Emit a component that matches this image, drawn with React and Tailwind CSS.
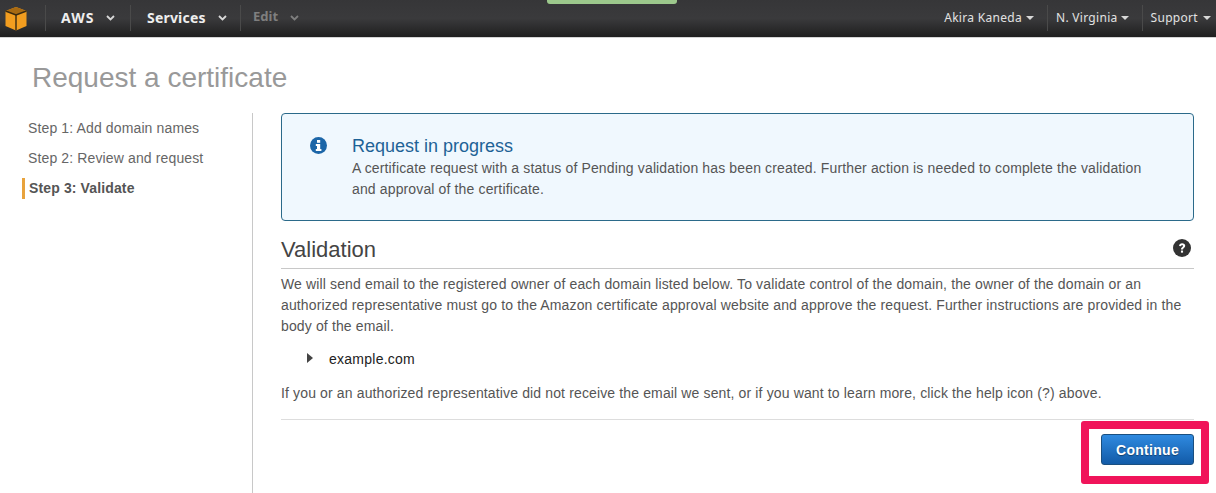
import React from "react";

const Chevron = ({ c = "#d8d8d8" }) => (
  <svg width="9" height="6" viewBox="0 0 9 6" className="shrink-0">
    <path d="M1 1 L4.5 4.5 L8 1" fill="none" stroke={c} strokeWidth="1.8" />
  </svg>
);
const Caret = () => (
  <svg width="8" height="4" viewBox="0 0 8 4" className="shrink-0">
    <path d="M0 0 H8 L4 4 Z" fill="#d8d8d8" />
  </svg>
);
const Sep = () => <div className="w-px h-[26px] bg-[#4a4a4a] shrink-0" />;

const Cube = () => (
  <svg width="22" height="25" viewBox="0 0 22 25" className="shrink-0">
    <path d="M11 1 L21.5 5 V20 L11 24.5 L0.5 20 V5 Z" fill="#f29d1f" />
    <path d="M0.5 5 L11 1 L21.5 5 L11 9 Z" fill="#a86a12" />
    <path d="M0.5 5 L11 9 L21.5 5" fill="none" stroke="#3a2a10" strokeWidth="1.4" />
    <path d="M11 9 V24.5" stroke="#3a2a10" strokeWidth="1.4" />
  </svg>
);

const InfoIcon = () => (
  <svg width="17" height="17" viewBox="0 0 17 17" className="shrink-0">
    <circle cx="8.5" cy="8.5" r="8.5" fill="#1c66a8" />
    <rect x="7" y="3" width="3.2" height="2.8" fill="#fff" />
    <path d="M5.8 7 H10.2 V12 H11.4 V14 H5.8 V12 H7 V9 H5.8 Z" fill="#fff" />
  </svg>
);

const HelpIcon = () => (
  <svg width="18" height="18" viewBox="0 0 19 19" className="shrink-0">
    <circle cx="9.5" cy="9.5" r="9.5" fill="#333" />
    <path d="M6.4 7.4 C6.5 5.4 7.9 4.5 9.6 4.5 C11.5 4.5 12.9 5.6 12.9 7.2 C12.9 9.4 10.6 9.4 10.6 11.2 H8.4 C8.4 8.6 10.5 8.6 10.5 7.3 C10.5 6.7 10.1 6.4 9.6 6.4 C9 6.4 8.7 6.8 8.6 7.6 Z" fill="#fff" />
    <rect x="8.4" y="12.2" width="2.2" height="2.2" fill="#fff" />
  </svg>
);

export default function App() {
  const nav = { fontFamily: '"Noto Sans", "DejaVu Sans", sans-serif' };
  return (
    <div className="relative w-[1216px] h-[493px] overflow-hidden bg-white" style={{ fontFamily: '"Liberation Sans", Arial, sans-serif' }}>
      <header
        className="h-[38px] border-b border-[#d4d4d4] bg-gradient-to-b from-[#363638] via-[#3a3a3c] to-[#1f1f1f] flex items-center text-white pb-[1px]"
        style={nav}
      >
        <div className="w-[45px] pl-[5px] flex items-center"><Cube /></div>
        <Sep />
        <div className="flex items-center w-[84px] pl-[15px] gap-[12px] text-[14px] tracking-[1px] font-bold text-[#eeeeee]">
          <span className="-mt-[2px]">AWS</span><Chevron />
        </div>
        <Sep />
        <div className="flex items-center w-[109px] pl-[16px] gap-[12px] text-[14px] tracking-[0.2px] font-bold text-[#eeeeee]">
          <span className="-mt-[2px]">Services</span><Chevron />
        </div>
        <Sep />
        <div className="flex items-center pl-[12px] gap-[12px] text-[13px] font-bold text-[#7f7f7f]">
          <span className="-mt-[2px]">Edit</span><Chevron c="#7f7f7f" />
        </div>
        <div className="ml-auto flex items-center text-[12px] tracking-[0.3px] text-[#e2e2e2]">
          <div className="flex items-center gap-[4px] pr-[13px]"><span>Akira Kaneda</span><Caret /></div>
          <Sep />
          <div className="flex items-center gap-[3px] pl-[8px] pr-[13px]"><span>N. Virginia</span><Caret /></div>
          <Sep />
          <div className="flex items-center gap-[5px] pl-[8px] pr-[5px]"><span>Support</span><Caret /></div>
        </div>
      </header>
      <div className="absolute left-[547px] top-0 w-[130px] h-[4px] rounded-b-[3px] bg-[#9cc88c]" />

      <h1 className="pl-[32px] pt-[22px] h-[75px] text-[28px] leading-[36px] text-[#999999] font-normal">Request a certificate</h1>

      <div className="flex">
        <aside className="w-[253px] h-[380px] shrink-0 border-r border-[#c8c8c8] pl-[22px] text-[14px] tracking-[0.13px] text-[#666666]">
          <div className="pl-[6px] h-[30px] leading-[30px]">Step 1: Add domain names</div>
          <div className="pl-[6px] h-[30px] leading-[30px]">Step 2: Review and request</div>
          <div className="border-l-[3px] border-[#e8a33d] pl-[4px] h-[21px] mt-[5px] leading-[21px] font-bold text-[#555555]">Step 3: Validate</div>
        </aside>

        <main className="w-[913px] ml-[28px] text-[14px] leading-[21px] tracking-[0.137px] text-[#555555]">
          <div className="h-[108px] rounded-[4px] border border-[#2b6a8a] bg-[#f0f8fe] flex pt-[22px] pl-[28px] pr-[40px]">
            <div className="w-[42px] pt-[1px] shrink-0"><InfoIcon /></div>
            <div>
              <div className="text-[18px] leading-[20px] tracking-normal text-[#1e6296]">Request in progress</div>
              <p className="mt-[2px]">A certificate request with a status of Pending validation has been created. Further action is needed to complete the validation and approval of the certificate.</p>
            </div>
          </div>

          <div className="mt-[14px] h-[34px] border-b border-[#c8c8c8] flex items-start justify-between pr-[3px]">
            <h2 className="text-[22px] leading-[30px] tracking-normal font-normal text-[#444444]">Validation</h2>
            <div className="pt-[4px]"><HelpIcon /></div>
          </div>

          <p className="mt-[5px]">We will send email to the registered owner of each domain listed below. To validate control of the domain, the owner of the domain or an authorized representative must go to the Amazon certificate approval website and approve the request. Further instructions are provided in the body of the email.</p>

          <div className="mt-[12px] flex items-center h-[21px] pl-[26px]">
            <svg width="6" height="10" viewBox="0 0 6 10" className="shrink-0 -mt-[3px]"><path d="M0 0 L6 5 L0 10 Z" fill="#444444" /></svg>
            <span className="ml-[16px] text-[#222222] tracking-[0.25px]">example.com</span>
          </div>

          <p className="mt-[13px]">If you or an authorized representative did not receive the email we sent, or if you want to learn more, click the help icon (?) above.</p>

          <div className="mt-[15px] border-t border-[#dddddd] flex justify-end">
            <div className="mt-[1px] -mr-[15px] w-[128px] h-[63px] rounded-[3px] border-[8px] border-[#f0145a] flex items-start justify-end pt-[5px] pr-[7px]">
              <button className="w-[93px] h-[31px] rounded-[3px] border border-[#1a4f80] bg-gradient-to-b from-[#2f8ae0] to-[#125ba8] text-white font-bold text-[14px] leading-none tracking-[0.3px] [text-shadow:0_1px_1px_rgba(0,0,0,0.4)]">Continue</button>
            </div>
          </div>
        </main>
      </div>
    </div>
  );
}
